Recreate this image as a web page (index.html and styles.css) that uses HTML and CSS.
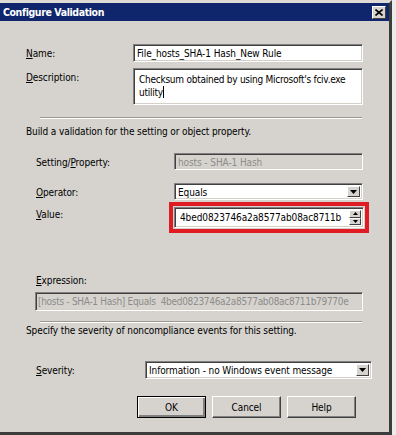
FILE: index.html
```html
<!DOCTYPE html>
<html>

<head>
    <meta content="text/html; charset=utf-8" http-equiv="Content-Type">
    <title>Configure Validation</title>
    <link rel="stylesheet" href="styles.css">
</head>

<body>
    <div class="window">
        <div class="titleBar">
            <span class="titleText">Configure Validation</span>
            <span class="closeBtn">
                <svg width="8" height="7" viewBox="0 0 8 7"><path d="M0.5 0.5 L7.5 6.5 M7.5 0.5 L0.5 6.5" stroke="#000" stroke-width="1.6"/></svg>
            </span>
        </div>
        <div class="dialogBody">
            <!-- name / description -->
            <div class="row rowName">
                <div class="lbl lblWide"><u>N</u>ame:</div>
                <div class="box boxWide">File_hosts_SHA-1 Hash_New Rule</div>
            </div>
            <div class="row rowDesc">
                <div class="lbl lblWide"><u>D</u>escription:</div>
                <div class="box boxWide boxMulti">Checksum obtained by using Microsoft's fciv.exe utility<span class="caret"></span></div>
            </div>
            <div class="sep sepFirst"></div>
            <div class="note noteBuild">Build a validation for the setting or object property.</div>

            <!-- setting / operator / value -->
            <div class="row rowSetting">
                <div class="lbl lblInner">Setting/<u>P</u>roperty:</div>
                <div class="box boxInner boxDisabled">hosts - SHA-1 Hash</div>
            </div>
            <div class="row rowOperator">
                <div class="lbl lblInner"><u>O</u>perator:</div>
                <div class="box boxInner boxCombo">Equals
                    <span class="dropBtn"><svg width="7" height="4" viewBox="0 0 7 4"><path d="M0 0 H7 L3.5 4 Z" fill="#000"/></svg></span>
                </div>
            </div>
            <div class="row rowValue">
                <div class="lbl lblInner lblValue"><u>V</u>alue:</div>
                <div class="highlight">
                    <div class="box boxValue">4bed0823746a2a8577ab08ac8711b
                        <span class="spin">
                            <span class="spinBtn"><svg width="5" height="3" viewBox="0 0 5 3"><path d="M0 3 H5 L2.5 0 Z" fill="#000"/></svg></span>
                            <span class="spinBtn"><svg width="5" height="3" viewBox="0 0 5 3"><path d="M0 0 H5 L2.5 3 Z" fill="#000"/></svg></span>
                        </span>
                    </div>
                </div>
            </div>

            <!-- expression -->
            <div class="lbl exprLabel"><u>E</u>xpression:</div>
            <div class="box boxExpr boxDisabled">[hosts - SHA-1 Hash] Equals &nbsp;4bed0823746a2a8577ab08ac8711b79770e</div>
            <div class="sep sepSecond"></div>
            <div class="note noteSeverity">Specify the severity of noncompliance events for this setting.</div>

            <div class="row rowSeverity">
                <div class="lbl lblSeverity"><u>S</u>everity:</div>
                <div class="box boxSeverity boxCombo">Information - no Windows event message
                    <span class="dropBtn"><svg width="7" height="4" viewBox="0 0 7 4"><path d="M0 0 H7 L3.5 4 Z" fill="#000"/></svg></span>
                </div>
            </div>

            <div class="buttons">
                <div class="btn btnDefault">OK</div>
                <div class="btn">Cancel</div>
                <div class="btn">Help</div>
            </div>
        </div>
    </div>
</body>

</html>
```

FILE: styles.css
```css
body {
    margin: 0;
    width: 396px;
    height: 435px;
    background: #ebebeb;
    font-family: "DejaVu Sans Condensed", "Liberation Sans", sans-serif;
    font-size: 10px;
    letter-spacing: -0.1px;
    color: #000;
    overflow: hidden;
}

.window {
    width: 389px;
    height: 429px;
    border-top: 3px solid #dedbd6;
    border-right: 3px solid #3c3c3c;
    border-bottom: 3px solid #3c3c3c;
    background: #d6d3ce;
    display: flex;
    flex-direction: column;
}

.titleBar {
    height: 18px;
    background: #10266c;
    display: flex;
    align-items: center;
    justify-content: space-between;
    padding-left: 3px;
    padding-right: 3px;
}

.titleText {
    color: #fff;
    font-weight: bold;
    font-size: 10.5px;
    letter-spacing: -0.4px;
}

.closeBtn {
    width: 14px;
    height: 13px;
    box-sizing: border-box;
    background: #d6d3ce;
    border: 1px solid;
    border-color: #fff #404040 #404040 #fff;
    display: flex;
    align-items: center;
    justify-content: center;
}

.dialogBody {
    display: flex;
    flex-direction: column;
}

.row {
    display: flex;
    align-items: flex-start;
}

.lbl {
    padding-top: 3px;
    line-height: 13px;
}

.lblWide {
    width: 107px;
    padding-left: 26px;
}

.lblInner {
    width: 138px;
    padding-left: 36px;
}

.lblSeverity {
    width: 109px;
    padding-left: 36px;
}

.box {
    position: relative;
    box-sizing: border-box;
    background: #fff;
    border: 1px solid;
    border-color: #808080 #fff #fff #808080;
    box-shadow: inset 1px 1px 0 #404040, inset -1px -1px 0 #d4d0c8;
    padding: 2px 3px;
    line-height: 13px;
    white-space: nowrap;
    overflow: hidden;
}

.boxWide {
    width: 230px;
    height: 18px;
}

.boxMulti {
    height: 37px;
    white-space: normal;
    padding: 4px 2px 2px 5px;
    letter-spacing: -0.25px;
}

.caret {
    display: inline-block;
    width: 1px;
    height: 12px;
    background: #000;
    vertical-align: -2px;
}

.boxInner {
    width: 189px;
    height: 17px;
}

.boxDisabled {
    background: #d6d3ce;
    color: #8c8c8c;
}

.boxCombo {
    padding-right: 20px;
}

.dropBtn {
    position: absolute;
    right: 2px;
    top: 2px;
    bottom: 2px;
    width: 13px;
    box-sizing: border-box;
    background: #d6d3ce;
    border: 1px solid;
    border-color: #fff #404040 #404040 #fff;
    display: flex;
    align-items: center;
    justify-content: center;
}

.rowName { margin-top: 23px; }
.rowDesc { margin-top: 6px; }

.sep {
    height: 0;
    border-top: 1px solid #9a9893;
    border-bottom: 1px solid #fff;
    margin-left: 40px;
    width: 322px;
}

.sepFirst { margin-top: 12px; }
.sepSecond { margin-top: 10px; }

.note {
    padding-left: 26px;
    line-height: 13px;
}

.noteBuild { margin-top: 6px; }
.noteSeverity { margin-top: 1px; }

.rowSetting { margin-top: 15px; }
.rowOperator { margin-top: 13px; }

.rowValue {
    margin-top: 2px;
    align-items: center;
}

.lblValue {
    width: 133px;
    padding-top: 0;
    margin-top: -6px;
}

.highlight {
    border: 4px solid #e01b24;
    padding: 1px;
}

.boxValue {
    width: 190px;
    height: 21px;
    padding-top: 3px;
    padding-left: 5px;
    padding-right: 18px;
}

.spin {
    position: absolute;
    right: 2px;
    top: 2px;
    bottom: 2px;
    width: 12px;
    display: flex;
    flex-direction: column;
}

.spinBtn {
    flex: 1;
    background: #d6d3ce;
    border: 1px solid;
    border-color: #fff #404040 #404040 #fff;
    display: flex;
    align-items: center;
    justify-content: center;
}

.exprLabel {
    margin-top: 38px;
    padding-left: 36px;
}

.boxExpr {
    margin-top: 5px;
    margin-left: 35px;
    width: 328px;
    height: 19px;
    padding-left: 2px;
    letter-spacing: -0.3px;
}

.rowSeverity { margin-top: 24px; }

.boxSeverity {
    width: 227px;
    height: 18px;
}

.buttons {
    display: flex;
    gap: 6px;
    margin-top: 17px;
    padding-left: 137px;
}

.btn {
    width: 69px;
    height: 22px;
    box-sizing: border-box;
    background: #d6d3ce;
    border: 1px solid;
    border-color: #fff #404040 #404040 #fff;
    box-shadow: inset -1px -1px 0 #808080;
    display: flex;
    align-items: center;
    justify-content: center;
}

.btnDefault {
    border: 1px solid #000;
    box-shadow: inset 1px 1px 0 #fff, inset -2px -2px 0 #808080;
}
```
